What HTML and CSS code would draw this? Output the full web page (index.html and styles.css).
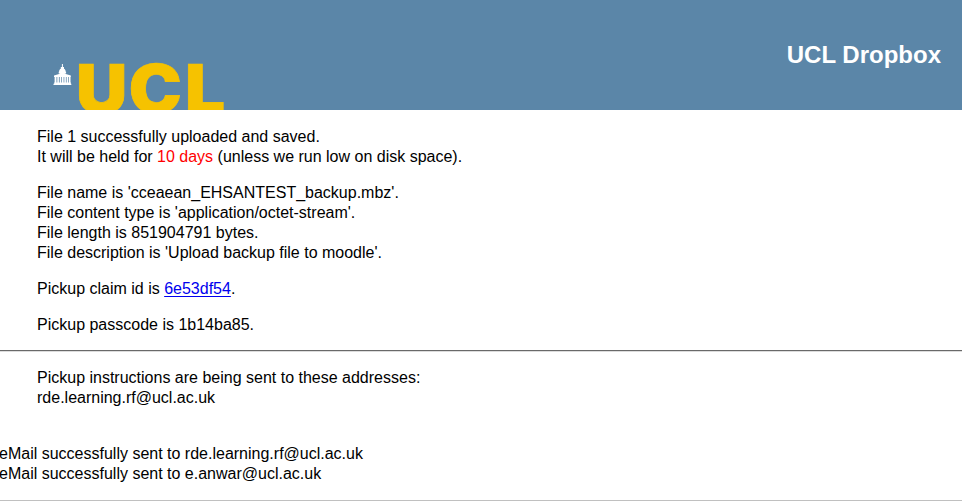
FILE: index.html
```html
<!DOCTYPE html>
<html lang="en">
<head>
<meta charset="utf-8">
<title>UCL Dropbox</title>
<link rel="stylesheet" href="styles.css">
</head>
<body>
<header class="banner">
  <svg class="logo" width="180" height="50" viewBox="50 60 180 50" role="img" aria-label="UCL">
    <g class="portico">
      <path d="M61.9 64h1v3.2h-1zM60.8 67h3.2v1.6h-3.2zM59 72.3c0-2.4 1.4-4 3.4-4s3.4 1.6 3.4 4z"/>
      <path d="M58.7 71.8h7.4v1.8h-7.4zM54 75.4l5-1.3 3.4-1.4 3.4 1.4 5 1.3v1.6H54z"/>
      <path d="M54.6 77h1.9v6h-1.9zM57.3 77h1.6v6h-1.6zM59.7 77h1.6v6h-1.6zM62 77h1.6v6H62zM64.3 77h1.6v6h-1.6zM66.6 77h1.6v6h-1.6zM68.9 77h1.6v6h-1.6z"/>
      <path d="M54.2 82.5h16.6v1.2h.5V85H53.5v-1.3h.7z"/>
    </g>
    <text class="wordmark" transform="scale(1.06 1)" y="113.4"><tspan x="71.6">U</tspan><tspan x="121.5">C</tspan><tspan x="174.5">L</tspan></text>
  </svg>
  <h1 class="title">UCL Dropbox</h1>
</header>
<main>
  <section class="details">
    <p>File 1 successfully uploaded and saved.<br>It will be held for <span class="period">10 days</span> (unless we run low on disk space).</p>
    <p>File name is 'cceaean_EHSANTEST_backup.mbz'.<br>File content type is 'application/octet-stream'.<br>File length is 851904791 bytes.<br>File description is 'Upload backup file to moodle'.</p>
    <p>Pickup claim id is <a href="#">6e53df54</a>.</p>
    <p>Pickup passcode is 1b14ba85.</p>
  </section>
  <hr class="rule">
  <section class="recipients">
    <p>Pickup instructions are being sent to these addresses:<br>rde.learning.rf@ucl.ac.uk</p>
  </section>
  <p class="status">eMail successfully sent to rde.learning.rf@ucl.ac.uk<br>eMail successfully sent to e.anwar@ucl.ac.uk</p>
  <hr class="end-rule">
</main>
</body>
</html>
```
FILE: styles.css
```css
body {
  margin: 0;
  background: #fff;
  color: #000;
  font: 16px/20px "Liberation Sans", Arial, sans-serif;
  overflow: hidden;
}

.banner {
  display: flex;
  justify-content: space-between;
  align-items: flex-end;
  height: 110px;
  box-sizing: border-box;
  padding: 0 21px 0 50px;
  background: #5b86a8;
}

.logo {
  display: block;
  overflow: hidden;
}

.portico {
  fill: #fff;
}

.wordmark {
  fill: #f6c200;
  stroke: #f6c200;
  stroke-width: 0.7px;
  font-family: Inter, sans-serif;
  font-size: 67px;
  font-weight: 900;
}

.title {
  margin: 0 0 41px;
  color: #fff;
  font-size: 24px;
  line-height: 28px;
}

p {
  margin: 0 0 16px;
}

.details {
  padding: 17px 0 0 37px;
}

.details p:last-child {
  margin-bottom: 15px;
}

.period {
  color: #f00;
}

a {
  color: #00e;
  text-underline-offset: 2px;
}

.rule {
  height: 1px;
  margin: 0;
  border: 0;
  border-bottom: 1px solid #dcdcdc;
  background: #696969;
}

.recipients {
  padding: 16px 0 20px 37px;
}

.status {
  margin-left: -1px;
}

.end-rule {
  height: 1px;
  margin: 16px 0 0;
  border: 0;
  background: #c0c0c0;
}
```
